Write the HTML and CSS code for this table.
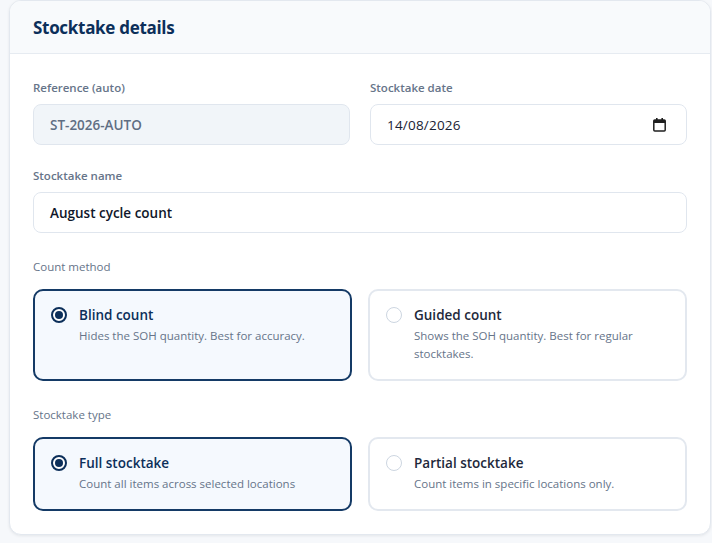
FILE: index.html
```html
<!DOCTYPE html>
<html lang="en">
<head>
<meta charset="utf-8">
<title>Stocktake details</title>
<link rel="stylesheet" href="styles.css">
</head>
<body>
<section class="card">
  <header class="card-header">
    <h2 class="card-title">Stocktake details</h2>
  </header>
  <div class="card-body">
    <div class="grid-2 row">
      <div class="field">
        <label class="label">Reference (auto)</label>
        <div class="input input-readonly">ST-2026-AUTO</div>
      </div>
      <div class="field">
        <label class="label">Stocktake date</label>
        <div class="input input-date">
          <span class="date-value">14/08/2026</span>
          <svg class="cal-icon" width="13" height="14" viewBox="0 0 13 14" aria-hidden="true">
            <rect x="3" y="0" width="1.6" height="3" fill="#1f1f1f"/>
            <rect x="8.4" y="0" width="1.6" height="3" fill="#1f1f1f"/>
            <rect x="0.8" y="2" width="11.4" height="11" rx="1" fill="none" stroke="#1f1f1f" stroke-width="1.5"/>
            <rect x="0.8" y="2" width="11.4" height="3" fill="#1f1f1f"/>
          </svg>
        </div>
      </div>
    </div>

    <div class="field row">
      <label class="label">Stocktake name</label>
      <div class="input input-strong">August cycle count</div>
    </div>

    <div class="group">
      <div class="label group-label">Count method</div>
      <div class="options">
        <div class="option selected">
          <span class="radio"></span>
          <div class="option-text">
            <div class="option-title">Blind count</div>
            <div class="option-desc">Hides the SOH quantity. Best for accuracy.</div>
          </div>
        </div>
        <div class="option">
          <span class="radio"></span>
          <div class="option-text">
            <div class="option-title">Guided count</div>
            <div class="option-desc">Shows the SOH quantity. Best for regular stocktakes.</div>
          </div>
        </div>
      </div>
    </div>

    <div class="group group-last">
      <div class="label group-label">Stocktake type</div>
      <div class="options">
        <div class="option selected">
          <span class="radio"></span>
          <div class="option-text">
            <div class="option-title">Full stocktake</div>
            <div class="option-desc">Count all items across selected locations</div>
          </div>
        </div>
        <div class="option">
          <span class="radio"></span>
          <div class="option-text">
            <div class="option-title">Partial stocktake</div>
            <div class="option-desc">Count items in specific locations only.</div>
          </div>
        </div>
      </div>
    </div>
  </div>
</section>
</body>
</html>
```
FILE: styles.css
```css
* { box-sizing: border-box; }

html, body {
  margin: 0;
  background: #f6f8fb;
}

body {
  padding: 0 1px 10px 9px;
  font-family: "Open Sans", "Noto Sans", sans-serif;
  color: #0f172a;
}

.card {
  background: #ffffff;
  border: 1px solid #e3e8ef;
  border-radius: 12px;
  box-shadow: 0 1px 3px rgba(15, 23, 42, 0.08);
  overflow: hidden;
}

.card-header {
  background: #f8fafc;
  border-bottom: 1px solid #e6ebf1;
  height: 53px;
  padding: 0 23px;
  display: flex;
  align-items: center;
}

.card-title {
  margin: 0;
  font-size: 17px;
  font-weight: 700;
  color: #0c2f5a;
  letter-spacing: -0.3px;
}

.card-body {
  padding: 26px 23px 23px;
}

.grid-2 {
  display: grid;
  grid-template-columns: 1fr 1fr;
  gap: 20px;
}

.row { margin-bottom: 23px; }

.field {
  display: flex;
  flex-direction: column;
}

.label {
  font-size: 11.5px;
  line-height: 16px;
  font-weight: 600;
  color: #667489;
  margin-bottom: 8px;
}

.input {
  height: 41px;
  border: 1px solid #e0e6ee;
  border-radius: 8px;
  padding: 0 16px;
  display: flex;
  align-items: center;
  font-size: 13.5px;
  background: #ffffff;
}

.input-readonly {
  background: #f1f5f9;
  color: #5f6e83;
  font-weight: 600;
}

.input-strong {
  font-weight: 600;
  color: #0f172a;
}

.input-date {
  justify-content: space-between;
  padding-right: 20px;
  color: #1a2233;
}

.date-value { letter-spacing: 0.2px; }

.cal-icon { display: block; }

.group { padding-top: 3px; margin-bottom: 22px; }
.group-last { padding-top: 4px; margin-bottom: 0; }

.group-label { margin-bottom: 14px; font-weight: 500; }

.options {
  display: grid;
  grid-template-columns: 1fr 1fr;
  gap: 16px;
}

.option {
  display: flex;
  align-items: flex-start;
  gap: 12px;
  border: 2px solid #e3e8ef;
  border-radius: 10px;
  padding: 14px 16px 16px;
  background: #ffffff;
}

.option.selected {
  border-color: #143a66;
  background: #f5f9fe;
}

.radio {
  flex: none;
  width: 16px;
  height: 16px;
  margin-top: 2px;
  border-radius: 50%;
  border: 1.5px solid #cdd6e1;
  background: #ffffff;
  display: flex;
  align-items: center;
  justify-content: center;
}

.option.selected .radio {
  border: 2px solid #0c2f5a;
}

.option.selected .radio::after {
  content: "";
  width: 8px;
  height: 8px;
  border-radius: 50%;
  background: #0c2f5a;
}

.option-title {
  font-size: 13.5px;
  line-height: 20px;
  font-weight: 600;
  color: #1e293b;
  margin-bottom: 2px;
}

.option.selected .option-title { color: #0c2f5a; }

.option-desc {
  font-size: 11.5px;
  line-height: 18px;
  color: #667489;
}
```
